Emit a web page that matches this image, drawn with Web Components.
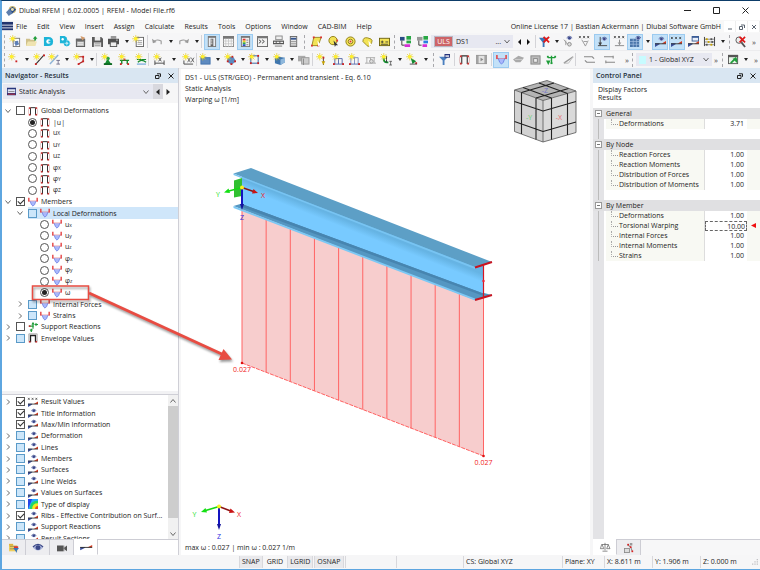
<!DOCTYPE html>
<html lang="en">
<head>
<meta charset="utf-8">
<title>Dlubal RFEM</title>
<style>
html,body{margin:0;height:100%}
body{font:7px/10px "Open Sans","Noto Sans",sans-serif;color:#1c1c1c;background:#f7f7f8;overflow:hidden}
rfem-app{box-sizing:border-box}
</style>
</head>
<body>
<rfem-app></rfem-app>
<script>
/* ---------- helpers ---------- */
const RESET = `*{box-sizing:border-box}button,input,select{font:inherit;color:inherit;margin:0;padding:0;border:0;background:none;border-radius:0}
button{display:flex;align-items:center;justify-content:center}`;
function define(name, css, html){
  customElements.define(name, class extends HTMLElement{
    connectedCallback(){
      if(this.shadowRoot) return;
      this.attachShadow({mode:'open'}).innerHTML = `<style>${RESET}${css}</style>` + (typeof html === 'function' ? html(this) : html);
    }
  });
}
const P = (d,s,w=1,f='none') => `<path d="${d}" stroke="${s}" stroke-width="${w}" fill="${f}"/>`;
const F = (d,f) => `<path d="${d}" fill="${f}"/>`;
const R = (x,y,w,h,f,s) => `<rect x="${x}" y="${y}" width="${w}" height="${h}" fill="${f}"${s?` stroke="${s}"`:''}/>`;
const C = (x,y,r,f,s) => `<circle cx="${x}" cy="${y}" r="${r}" fill="${f}"${s?` stroke="${s}"`:''}/>`;
const dots = (c,...p) => p.map(([x,y])=>R(x-1,y-1,2,2,c)).join('');
const sun = P('M3 -1v8M-1 3h8M0 0l6 6M6 0L0 6','#e3c61a',.7)+C(3,3,2,'#fff02a');
const eye = (x,y) => `<g transform="translate(${x} ${y})">`+F('M0 2.5Q3 -1 6 2.5Q3 6 0 2.5z','#aab4dc')+C(3,2.4,1.5,'#3a4788')+P('M0 2Q3 -1.4 6 2','#3a4788',.8)+'</g>';
const wedge = F('M0 8v4L5 9V8z','#3a4f9c')+F('M7 8.500L12 5.500V8.500z','#d33a1f')+P('M0 8.500h12','#333',1);
const xxx = P('M0 0l2 2.4M2 0L0 2.4M4.5 0l2 2.4M6.500 0l-2 2.4M9 0l2 2.4M11 0L9 2.4','#333',.8);
const W = P('M1 1v4M11 1v4','#e33a3a',1.6)+P('M0 5h12','#e33a3a',.8)+F('M2.500 5h7L8 9 6 11 4 9z','#a9b8fb')+P('M2.500 5L4 9l2 2 2-2 1.500-4','#5a70e0',.8);
const frame = P('M3 11V2h6v9','#333',1.2)+dots('#c33',[2,10.500],[10,10.500],[2,2.500],[10,2.500])+P('M1 3Q0 6 1 10M11 3Q12 6 11 10','#c88',.6);
const ICONS = {
 app:C(7,5,4,'#c9b877')+F('M2 6l5-4 4 3-5 5z','#2a4c86')+F('M0 8l4-4 3 5-4 3z','#5f7fae')+C(7,5,1.6,'#e8e0b0'),
 logo:R(0,1,12,9,'#22346e')+P('M0 4.500h12M0 7.500h12','#fff',.9),
 new:R(3.500,2.500,7,9,'#fff','#777')+P('M5 6h4M5 8h4','#4a6fb5')+F('M5 7l3-2 2 4-4 2z','#5d7fb8')+sun,
 open:F('M0 3h4l1 1h5v7H0z','#cfc08a')+F('M2 6h10l-2 5H0z','#efe3b0')+F('M9 5V3H7.500L10 0l2.500 3H11v2z','#1f9d3a'),
 cloud:F('M1 1h5q5 0 5 5t-5 5H1z','#1cb4d8')+C(6,6,2.400,'#fff')+R(6,5,3,2,'#1cb4d8'),
 gear:F('M1 0h5q3 1 3 4L7 8H1z','#1cb4d8')+C(8.500,8,3.300,'#1cb4d8')+C(8.500,8,1.300,'#fff')+C(4,3.500,1.300,'#fff')+P('M4 8h9M8.500 4v8','#8fdcee',.6),
 manage:R(1.500,3.500,9,8,'#b8b8b8','#555')+R(1,3,10,3,'#6a6a6a')+F('M6 0l5 2-3 3z','#d39a6a')+R(3,7,6,1,'#fff')+P('M3 9.500h6','#eee'),
 save:F('M0 1h10l2 2v9H0z','#5a5a5a')+R(3,1,6,4,'#eee')+R(2,7,8,5,'#ddd')+P('M3 8.500h6M3 10.500h6','#777',.6),
 print:R(3,0,6,3,'#999')+R(0,3,12,6,'#505050')+R(2.500,6.500,7,5,'#eee','#555')+R(9,4,1.500,1,'#eee'),
 report:R(3.500,1.500,8,10,'#fff','#666')+P('M5 5h5M5 7h5M5 9h5','#888',.8)+sun,
 undo:P('M2 6Q5 3 10 5.500V9','#999',1.2)+F('M0 3l1 5 4-1.500z','#999'),
 redo:P('M10 6Q7 3 2 5.500V9','#999',1.2)+F('M12 3l-1 5-4-1.500z','#999'),
 panel:R(2,0,9,12,'#777')+R(3,2,7,9,'#e9edf3')+R(5,3,3,8,'#666')+P('M5 4.500h2M5 6.500h2M5 8.500h2','#fff',.9),
 table:R(.500,.500,11,11,'#fafafa','#888')+R(0,0,12,3,'#777')+P('M0 5.500h12M0 8.500h12M3 3v9M6 3v9M9 3v9','#bbb',.7),
 panelc:R(1,0,10,12,'#777')+R(2,2,8,9,'#eee')+R(3,3,3,2,'#d33')+R(3,5,3,2,'#e8d020')+R(3,7,3,2,'#2fa84a')+R(3,9,3,2,'#2a52c8')+P('M7 4.500h2M7 7h2M7 9.500h2','#666',.8),
 console:R(.500,.500,11,11,'#f2f2f2','#666')+R(0,0,12,2.500,'#777')+P('M2 4l2.500 2L2 8M5.500 4L8 6 5.500 8','#333',.9),
 mac:R(3,0,7,4,'#eee','#888')+R(0,5,12,4,'#555')+P('M1 7h2M4 7h3M8 7h3','#eee',1.400)+P('M2 11h8','#777'),
 scale:R(2.500,.500,7,11,'#e6e6e6','#666')+R(3,2,6,2,'#36558f')+P('M3 6h6M3 8h6M3 10h6','#888',.8),
 selq:P('M3 1.500h8L8 10.500H1z','#8b7b10',.9,'#f3e356')+dots('#d33',[3,1.500],[11,1.500],[1,10.500],[8,10.500])+F('M7 5l4 5-2 0-1 2z','#fff'),
 selc:C(5.500,5,4.500,'#f3e356','#8b7b10')+F('M6 5l5 5-2.500 0-1 2z','#333')+dots('#d33',[10,5]),
 selr:C(6,6,5,'#f3e356','#8b7b10')+C(6,6,2.500,'#fff6b0','#8b7b10')+dots('#d33',[6,6]),
 sell:P('M1 6Q1 1 6 2t5 3-2 5-5-1z','#8b7b10',.9,'#f3e356')+F('M7 5l4 5-2 0-1 2z','#fff'),
 selb:R(.500,2.500,11,8,'#f3e356','#6b6010')+P('M2 6.500h3M3.500 5v3M7 6.500h3M2 9h8','#333',.9),
 tree1:R(0,1,5,4,'#2a4c86')+R(7,0,5,4,'#29a745')+R(7,5,5,3,'#29a745')+R(5,9,6,3,'#d62fd6')+P('M2 5v5h3','#333'),
 tree2:R(0,1,6,4,'#999')+R(7,0,5,4,'#29a745')+R(7,5,5,3,'#2a7fe0')+R(6,9,5,3,'#d62fd6')+P('M2 5v5h3','#333'),
 filterx:F('M0 2h10L6 7v5H4V7z','#3a76b8')+P('M5 1l6 6M11 1L5 7','#e01818',2),
 eye1:eye(4,0)+P('M1 4l4 5M3 5v5','#999')+C(7,9,2,'#ddd','#888'),
 x1:xxx+P('M3 4l4 7 3-6M5 6h4','#999',1),
 load:P('M3.500 1v8M1 10.500h10','#444')+F('M1.500 7h4l-2 4z','#444')+eye(5,1),
 x2:xxx+P('M6 4v6M1 10.500h10','#888')+F('M4 7h4l-2 3z','#999'),
 grid:R(0,3,10,9,'#4a76aa')+P('M0 6h10M0 9h10M3.500 3v9M7 3v9','#a9c4e4',.7)+eye(6,0),
 res1:wedge+eye(4,1), res2:wedge+`<g transform="translate(0 1)">${xxx}</g>`,
 win:R(4,0,8,6,'#3a5c96')+R(5,2,6,3,'#e8eef8')+wedge,
 abac:P('M.500 1v10M11.500 1v10','#333',1)+P('M0 3.500h12M0 6.500h12M0 9.500h12','#555',.7)+dots('#c9a400',[3,3.500],[5,6.500],[8,9.500])+dots('#555',[8,3.500],[9,6.500],[3,9.500]),
 magx:C(4.500,4.500,3.500,'#eee','#555')+P('M7 7l4 5','#555',2)+P('M5 1l6 6M11 1L5 7','#e01818',1.8),
 node:sun+dots('#c22',[8,8]), line:P('M2 11L11 1','#333',1.2)+dots('#c22',[2,11],[11,1.500])+sun,
 line2:P('M1 11L10 1','#8fb4d8',1.600)+sun+P('M8 7h4M10 7v4M8 11h4','#557',.8),
 poly:P('M2 3h8v5L5 11','#a22',1.2)+sun+dots('#c22',[10,3],[10,8],[5,11]),
 sup1:F('M3 11l3-6 4 6z','#138a2f')+R(2,10,9,2,'#0f6b24')+C(6.500,5,2,'#27a045')+sun,
 sup2:P('M1 7h10M3 7v4M9 7v4','#138a2f',1.500)+dots('#c22',[2,11],[10,11],[6,6])+sun,
 sup3:P('M1 6h10M2 9Q6 5 11 9','#138a2f',1.300)+P('M1 11h10','#4a90d0')+sun,
 dim1:P('M1 7v5M11 7v5M1 10h10','#444')+P('M5 4l3 4M8 4L5 8','#222',.8)+sun,
 dim2:P('M1 7v4h10','#444')+P('M5 4l3 5M8 4L5 9M9 4l3 5M12 4L9 9','#333',.7)+sun,
 surf:R(1,4,10,7,'#5d8ac0','#4272ac')+sun, blob:F('M3 3l6 0 3 5-5 4-5-4z','#5d8ac0')+dots('#c22',[3,8],[11,8],[7,11],[8,3])+sun,
 opening:R(2,2,8,8,'none','#2d5f9c')+dots('#c22',[2,2],[10,2],[2,10],[10,10])+sun,
 solid:F('M1 5l4-2 7 1v5l-5 3-6-2z','#3f76ae')+F('M7 6l5-2v5l-5 3z','#8fb8dc')+sun,
 solidg:R(0,2,8,6,'#aaa')+R(4,4,8,7,'#ccc','#999')+P('M6 5v7','#888'),
 l1:P('M7 3v9','#444')+dots('#c22',[7,4])+F('M5 8h4l-2 4z','#c9a400')+sun,
 l2:P('M1 11h10M2 5v6M6 5v6M10 5v6M2 5h8','#5468a8')+dots('#c22',[1,11],[11,11])+sun,
 l3:P('M2 4h8v7M2 4v7M6 4v7','#7c8cc0')+P('M1 11h10','#5468a8')+dots('#c22',[1,11],[11,11])+sun,
 l4:P('M1 4h10M2 4v6M6 4v6M10 4v6M0 10h12','#aaa')+C(7,8,2,'#ddd','#999'),
 l5:P('M3 3Q2 10 8 9','#138a2f',2)+P('M9 8h3M10.500 8v4M9 12h3','#444',.8)+P('M6 2v7','#333')+sun,
 l6:F('M4 4l6 4-4 3z','#138a2f')+dots('#c22',[10,10])+P('M3 11h8','#444')+sun,
 filter:F('M0 3h10L6 7v5H4V7z','#4a7fbf')+R(6,0,6,4,'#27357c')+R(7,1.500,4,1.500,'#fff'),
 frame, film:R(.500,1.500,11,9,'#e2e2e2','#999')+P('M2 1v10M10 1v10','#999',1.5)+F('M5 4l3 2-3 2z','#888'),
 warp:W, s1:F('M0 6l6-4 6 2-4 5-5 0z','#aaa')+P('M2 6h8','#ccc'), s2:R(1,2,10,9,'#bbb','#888')+R(4,5,4,4,'#eee','#888'),
 s3:P('M6 2v9M2 4h8','#1f9d3a',1.500)+dots('#1f9d3a',[2,3],[10,3],[6,10])+F('M0 7h5l-2.500 5z','#1f9d3a'),
 s4:P('M1 10L11 3','#999',1.500)+P('M1 10h5L11 3','#bbb'), s5:P('M0 3h9l2 2M12 9H3L1 7','#888',1.200),
 s6:P('M0 3h10M10 2v3M2 9h10M2 7v3','#888',1.200), cs:R(.500,1.500,10,9,'#e8f4e8','#555')+R(0,1,11,2.500,'#555')+P('M3 10L9 4','#1f9d3a',2)+F('M5 5h5v5z','#1f9d3a'),
 type:R(0,0,12,12,'#27a7ff')+F('M0 0h5L0 12z','#2746e8')+F('M12 12V2Q2 2 2 12z','#20d868')+F('M12 12V5Q5 5 5 12z','#f4e920')+F('M12 12V8.500Q8.500 8.500 8.500 12z','#f04a20'),
 react:P('M6 1v7M1 5h6M8 3h4M4 8v4','#1f9d3a',1.4)+F('M4 3l2-3 2 3zM9 1l3 2-3 2zM2 9h4l-2 3z','#1f9d3a')+dots('#c33',[2,5]),
 envelope:P('M3 11V3h6v8','#222',1.6)+dots('#c33',[2,10.500],[10,10.500])+P('M1 1h10M1 1v9M11 1v9','#777',.7),
 tabdata:R(0,1,5,3,'#e0b23a')+F('M0 3h10v7H0z','#f0cf5a')+P('M1 4h9M1 7h7','#555',.6)+F('M5 6h7L9.500 9v3z','#3a76b8')+R(6,4,5,2,'#d33'),
 tabeye:`<g transform="translate(0 1) scale(2 1.900)">${eye(0,0)}</g>`, camera:R(0,3,8,7,'#555')+F('M8 6l4-3v7L8 7z','#555')+P('M9 3v7','#999',.5),
 wedge:`<g transform="translate(-1 -2) scale(1.200 1)">${wedge}</g>`,
 balance:P('M6 1v9M2 3h8M2 3L.500 8h4L2.500 3M10 3L8 8h4L9.800 3M3 11h6','#555',.8), panel2:R(.500,6.500,6,5,'#ddd','#888')+P('M4 2l4 3 2 5','#888',1.3)+dots('#d22',[5,2],[8,5],[10,10])+R(7,0,3,3,'#999'),
 combo:R(0,1,12,10,'#27357c')+R(1,3,10,5,'#dfe6f5')+P('M1 9.500h10','#d33',1.200)+P('M2 6h8','#777')
};
ICONS.val = ICONS.res2;
define('ui-icon', `:host{display:block;width:11px;height:11px;flex:none}svg{display:block;width:100%;height:100%;overflow:visible}`,
 el => `<svg viewBox="0 0 12 12" aria-hidden="true">${ICONS[el.getAttribute('name')]||''}</svg>`);

/* ---------- window chrome ---------- */
define('title-bar', `:host{display:flex;align-items:center;height:19px;flex:none;background:#fff;padding-left:4px}
 h1{font:inherit;margin:0 0 0 2px;flex:1}button{width:29px;height:19px}svg{width:7px;height:7px;fill:none;stroke:#222;stroke-width:1}`,
 `<ui-icon name="app"></ui-icon><h1>Dlubal RFEM | 6.02.0005 | RFEM - Model File.rf6</h1>
 <button aria-label="Minimize"><svg viewBox="0 0 7 7"><path d="M0 3.500h7"/></svg></button>
 <button aria-label="Maximize"><svg viewBox="0 0 7 7"><path d="M.500.500h6v6h-6z"/></svg></button>
 <button aria-label="Close"><svg viewBox="0 0 7 7"><path d="M.500.500l6 6M6.500.500l-6 6"/></svg></button>`);
define('menu-bar', `:host{display:flex;align-items:center;height:13px;flex:none;background:#f8f8f8}
 nav{display:flex;flex:1;gap:10px;margin-left:3px}.b{width:12px;height:11px;background:#fff;border-right:1px solid #eee}svg{width:6px;height:6px;fill:none;stroke:#5a6470}
 span{margin-right:3px}`,
 () => `<ui-icon name="logo"></ui-icon><nav>${'File Edit View Insert Assign Calculate Results Tools Options Window CAD-BIM Help'.split(' ').map(t=>`<button>${t}</button>`).join('')}</nav>
 <span>Online License 17 | Bastian Ackermann | Dlubal Software GmbH</span>
 <button class="b" aria-label="Minimize document"><svg viewBox="0 0 6 6"><path d="M1 5h4"/></svg></button>
 <button class="b" aria-label="Restore document"><svg viewBox="0 0 6 6"><path d="M.500 2.500h3v3h-3zM2 1h3.500v3"/></svg></button>
 <button class="b" aria-label="Close document"><svg viewBox="0 0 6 6"><path d="M1 1l4 4M5 1L1 5"/></svg></button>`);

/* ---------- toolbars ---------- */
/* tokens: name = button, name* = active button, v = drop-down arrow, | = separator, : = grip, l r = step arrows, > = overflow */
define('tool-group', `:host{display:flex;align-items:center;justify-content:space-between;flex:none;height:18px}
 button{height:16px;width:14px;flex:none}.v,.s{width:8px}.on{background:#c3e1f8;border:1px solid #9ccbf0;width:16px}
 .v::before{content:"";border:2px solid transparent;border-top:3px solid #222;border-bottom:0}
 .l::before,.r::before{content:"";border:3px solid transparent}.l::before{border-right:3px solid #111;border-left:0}.r::before{border-left:3px solid #111;border-right:0}
 i{width:1px;height:13px;background:#d4d4d8}.g{width:2px;height:14px;background:none;border-left:1px dashed #a8a8ac}
 .m{width:8px;font-size:8px;color:#444}`,
 el => el.getAttribute('items').split(' ').map(t=>{
  if(t==='|') return '<i></i>'; if(t===':') return '<i class="g"></i>';
  if(t==='v') return '<button class="v" aria-label="More options"></button>';
  if(t==='l') return '<button class="s l" aria-label="Previous"></button>';
  if(t==='r') return '<button class="s r" aria-label="Next"></button>';
  if(t==='>') return '<button class="m" aria-label="Show more">»</button>';
  const on=t.endsWith('*'), n=t.replace('*','');
  return `<button${on?' class="on" aria-pressed="true"':''} aria-label="${n}"><ui-icon name="${n}"></ui-icon></button>`;
 }).join(''));
define('tool-combo', `:host{display:flex;align-items:center;height:13px;flex:none;background:#e7e8f1;padding:0 3px;gap:3px}
 select{appearance:none;flex:1;min-width:0;height:12px}svg{width:6px;height:5px;fill:none;stroke:#666;flex:none}`,
 el => `<slot name="lead"></slot><select aria-label="${el.getAttribute('label')}"><option>${el.getAttribute('value')}</option></select><slot name="tail"></slot><svg viewBox="0 0 6 5"><path d="M.500 1L3 4l2.500-3"/></svg>`);
define('tool-strip', `:host{display:flex;align-items:center;height:18px;flex:none;background:#f6f6f7;border-bottom:1px solid #ececee;padding-left:2px}
 .badge{background:#cd6468;color:#fff;width:19px;line-height:9px;text-align:center;border:1px solid #b9b9c4}.sw{width:7px;height:8px;background:#c8fbff}`,
 el => el.getAttribute('row')==='1' ? `
 <tool-group style="width:127px" items=": new open cloud gear manage save print v"></tool-group>
 <tool-group style="width:70px" items="report | undo v redo v"></tool-group>
 <tool-group style="width:100px" items="| panel* table panelc* console mac scale"></tool-group>
 <tool-group style="width:87px;margin-left:3px" items=": selq selc selr sell selb"></tool-group>
 <tool-group style="width:35px;margin:0 2px 0 3px" items=": tree1 tree2"></tool-group>
 <tool-combo style="width:82px" label="Load case" value="DS1"><span slot="lead" class="badge">ULS</span><span slot="tail">...</span></tool-combo>
 <tool-group style="width:46px;margin-left:2px" items="l r | filterx v"></tool-group>
 <tool-group style="width:66px" items="eye1 x1 load* x2"></tool-group>
 <tool-group style="width:58px" items="grid* v res1* res2*"></tool-group>
 <tool-group style="width:72px;margin-left:1px" items="win abac v : magx >"></tool-group>` : `
 <tool-group style="width:92px" items=": node v line line2 v poly v"></tool-group>
 <tool-group style="width:52px" items="| sup1 sup2 sup3"></tool-group>
 <tool-group style="width:48px" items="| dim1 v dim2"></tool-group>
 <tool-group style="width:100px" items="| surf v blob v opening v solid v"></tool-group>
 <tool-group style="width:134px" items="solidg | l1 l2 l3 l4 l5 v l6 v"></tool-group>
 <tool-group style="width:59px;margin-left:3px" items=": filter | frame film |"></tool-group>
 <tool-group style="width:82px;margin-left:1px" items="warp* s1 s2 s3 s4"></tool-group>
 <tool-group style="width:56px" items="| s5 s6 >"></tool-group>
 <tool-group style="width:4px;margin-left:1px" items=":"></tool-group>
 <tool-combo style="width:76px" label="Coordinate system" value="1 - Global XYZ"><span slot="lead" class="sw"></span></tool-combo>
 <tool-group style="width:48px" items="> : cs v >"></tool-group>`);

/* ---------- docked panels ---------- */
define('panel-head', `:host{display:flex;align-items:center;height:15px;flex:none;background:#d9e6f2;padding:0 1px 0 3px}
 h2{font:600 7px/10px "Open Sans",sans-serif;margin:0;flex:1;color:#25303c}button{width:13px;height:13px}svg{width:6px;height:6px;fill:none;stroke:#222}`,
 `<h2><slot></slot></h2><button aria-label="Float panel"><svg viewBox="0 0 6 6"><path d="M.500 2.500h3.500v3H.500zM2 .800h3.500v3"/></svg></button>
 <button aria-label="Close panel"><svg viewBox="0 0 6 6"><path d="M.500.500l5 5M5.500.500l-5 5"/></svg></button>`);
define('tree-row', `:host{display:flex;align-items:center;min-height:0}
 :host([selected]) .pick{background:#cfe6fa}
 .pick{display:flex;align-items:center;gap:3px;flex:1;height:100%;min-width:0}
 .tg{width:10px;height:10px;margin-right:3px;flex:none}.tg svg{width:6px;height:6px;fill:none;stroke:#666}
 .no{visibility:hidden}
 input{appearance:none;width:9px;height:9px;border:1px solid #555;background:#fff;display:grid;place-items:center;flex:none}
 input.mixed{background:#cce6fa;border-color:#5a9ac8}
 input[type=checkbox]:checked::before{content:"";width:5px;height:3px;border:solid #333;border-width:0 0 1px 1px;transform:translateY(-1px) rotate(-45deg)}
 input[type=radio]{border-radius:50%}input[type=radio]:checked::before{content:"";width:5px;height:5px;border-radius:50%;background:#222}
 label{white-space:nowrap;display:flex;line-height:11px}::slotted(sub){font-size:5px;line-height:11px;padding-top:1px}
 ui-icon{width:10px;height:10px}`,
 el => {
  const lv=+el.getAttribute('level')||0, k=el.getAttribute('kind'), tg=el.getAttribute('toggle');
  const radio=k.startsWith('radio');
  return `<span style="width:${1+lv*12}px;flex:none"></span>
  <button class="tg${tg?'':' no'}" aria-label="Toggle branch"><svg viewBox="0 0 6 6"><path d="${tg==='open'?'M.500 1.500L3 4.500l2.500-3':'M2 .500l2.500 2.500L2 5.500'}"/></svg></button>
  <div class="pick"><input id="i" type="${radio?'radio':'checkbox'}" class="${k}"${k==='checked'||k==='radio-on'?' checked':''}>
  <ui-icon name="${el.getAttribute('icon')}"></ui-icon><label for="i"><slot></slot></label></div>`;
 });
const row=(level,toggle,kind,icon,text,extra='')=>`<tree-row level="${level}" ${toggle?`toggle="${toggle}"`:''} kind="${kind}" icon="${icon}" ${extra}>${text}</tree-row>`;
define('tab-strip', `:host{display:flex;height:16px;flex:none;border-top:1px solid #cdcdd4}
 button{width:24px;height:16px;background:#ededf0;border:solid #cdcdd4;border-width:0 1px 1px 0}
 .a{background:#fff;margin-top:-1px;border-bottom-color:#fff}ui-icon{width:10px;height:10px}`,
 el => el.getAttribute('items').split(' ').map(t=>`<button class="${t.endsWith('*')?'a':''}" aria-label="${t.replace('*','')}"><ui-icon name="${t.replace('*','')}"></ui-icon></button>`).join(''));
define('results-navigator', `:host{display:flex;flex-direction:column;width:177px;flex:none;background:#fff;border-right:1px solid #cfcfd6;min-height:0;margin:-1px 0 0}
 .bar{display:flex;align-items:center;background:#f6f6f7;height:20px;flex:none;padding:0 5px 3px 1px}
 .combo{display:flex;flex:1;align-items:center;background:#e7e8f1;height:15px;padding:0 4px;gap:3px}
 .combo ui-icon{width:9px;height:9px}select{appearance:none;flex:1}
 svg{width:6px;height:6px;fill:none;stroke:#666}.st{width:10px;height:15px}.st svg{fill:#222;stroke:none}.p{background:#d8d8de}
 .tree{display:grid;grid-auto-rows:1fr;height:239px;flex:none;margin-top:2px}
 .split{flex:1;border-bottom:1px solid #cfcfd6;background:#fff;display:flex;align-items:end}.split::after{content:"";height:3px;flex:1;background:#f2f2f4}
 .low{display:grid;grid-template-columns:1fr 10px;height:144px;flex:none;overflow:hidden}
 .list{display:grid;grid-auto-rows:1fr;height:149px;padding-top:1px;min-width:0;overflow:hidden}
 .sb{display:flex;flex-direction:column;background:#f1f1f1;height:144px}.sb button{height:11px}.sb div{height:112px;background:#cdcdcd}.sb span{flex:1}`,
 () => `<panel-head>Navigator - Results</panel-head>
 <div class="bar"><div class="combo"><ui-icon name="combo"></ui-icon><select aria-label="Analysis type"><option>Static Analysis</option></select><svg viewBox="0 0 6 6"><path d="M.500 1.500L3 4.500l2.500-3"/></svg></div>
 <button class="st p" aria-label="Previous"><svg viewBox="0 0 6 6"><path d="M4.500 0v6L1 3z"/></svg></button><button class="st" aria-label="Next"><svg viewBox="0 0 6 6"><path d="M1.500 0v6L5 3z"/></svg></button></div>
 <div class="tree">${row(0,'open','box','frame','Global Deformations')}${row(1,'','radio-on','frame','|u|')}
 ${['u<sub>X</sub>','u<sub>Y</sub>','u<sub>Z</sub>','φ<sub>X</sub>','φ<sub>Y</sub>','φ<sub>Z</sub>'].map(t=>row(1,'','radio','frame',t)).join('')}
 ${row(0,'open','checked','warp','Members')}${row(1,'open','mixed','warp','Local Deformations','selected')}
 ${['u<sub>x</sub>','u<sub>y</sub>','u<sub>z</sub>','φ<sub>x</sub>','φ<sub>y</sub>','φ<sub>z</sub>'].map(t=>row(2,'','radio','warp',t)).join('')}
 ${row(2,'','radio-on','warp','ω')}${row(1,'shut','mixed','warp','Internal Forces')}${row(1,'shut','mixed','warp','Strains')}
 ${row(0,'shut','box','react','Support Reactions')}${row(0,'shut','mixed','envelope','Envelope Values')}</div>
 <div class="split"></div>
 <div class="low"><div class="list">${row(0,'shut','checked','val','Result Values')}${row(0,'','checked','res1','Title Information')}${row(0,'','checked','res1','Max/Min Information')}
 ${['Deformation','Lines','Members','Surfaces','Line Welds','Values on Surfaces'].map(t=>row(0,'shut','mixed','res1',t)).join('')}
 ${row(0,'shut','mixed','type','Type of display')}${row(0,'shut','checked','res1','Ribs - Effective Contribution on Surf...')}
 ${row(0,'shut','mixed','res1','Support Reactions')}${row(0,'shut','mixed','res1','Result Sections')}</div>
 <div class="sb"><button aria-label="Scroll up"><svg viewBox="0 0 6 6"><path d="M.500 4.500L3 1.500l2.500 3"/></svg></button><div></div><span></span><button aria-label="Scroll down"><svg viewBox="0 0 6 6"><path d="M.500 1.500L3 4.500l2.500-3"/></svg></button></div></div>
 <tab-strip items="tabdata tabeye camera wedge*"></tab-strip>`);

define('factor-table', `:host{display:block;flex:1;background:linear-gradient(90deg,#e3e3e6 11px,#fff 11px)}
 table{width:100%;border-spacing:0;table-layout:fixed}td,th{padding:0;height:10px;line-height:10px;font-weight:400;text-align:left;white-space:nowrap;vertical-align:top}
 .g th{height:11px;line-height:11px;background:#e0e0e2}.g span{margin-left:2px}
 .x b{display:block;width:7px;height:7px;margin:2px auto;border:1px solid #999;background:linear-gradient(#777,#777) center/3px 1px no-repeat #fff}
 td.x{background:linear-gradient(#bbb,#bbb) center/1px 100% no-repeat}
 .n{background:#f8f9f3;display:flex;align-items:center;height:10px;margin-left:2px}.n::before{content:"";width:6px;border-bottom:1px dotted #999;border-left:1px dotted #aaa;height:5px;margin:0 1px 5px 5px}
 td.v{text-align:right;padding-right:3px;background:#fff;border-left:1px solid #ddd}td.ed{padding:0}.e{background:#f8f9f3}
 input{width:100%;height:10px;line-height:8px;text-align:right;border:1px dashed #666;display:block;padding-right:1px}
 .e svg{display:block;width:5px;height:5px;margin:2px 0 0 4px}`,
 () => {
  const g=(t,rows,last)=>`<tr class="g"><th class="x"><b></b></th><th colspan="3"><span>${t}</span></th></tr>`+rows.map(([n,v])=>`<tr><td class="x"></td><td><div class="n">${n}</div></td>${
   n==='Torsional Warping'?`<td class="v ed"><input aria-label="${n}" value="${v}"></td><td class="e"><svg viewBox="0 0 5 5"><path d="M0 2.500L5 0v5z" fill="#f01010"/></svg></td>`:`<td class="v">${v}</td><td class="e"></td>`}</tr>`).join('')+(last?'':'<tr><td class="x"></td><td></td><td></td><td></td></tr>');
  return `<table><colgroup><col style="width:11px"><col><col style="width:43px"><col style="width:13px"></colgroup><tbody>${g('General',[['Deformations','3.71']])}${g('By Node',[['Reaction Forces','1.00'],['Reaction Moments','1.00'],['Distribution of Forces','1.00'],['Distribution of Moments','1.00']])}${g('By Member',[['Deformations','1.00'],['Torsional Warping','10.00'],['Internal Forces','1.00'],['Internal Moments','1.00'],['Strains','1.00']],1)}</tbody></table>`;
 });
define('control-panel', `:host{display:flex;flex-direction:column;width:167px;flex:none;background:#fff;margin:-1px 0 0}
 p{margin:0;padding:3px 5px 0;line-height:8px;height:25px;flex:none}tab-strip{background:#f7f7f8}`,
 `<panel-head>Control Panel</panel-head><p>Display Factors<br>Results</p><factor-table></factor-table><tab-strip items="balance* panel2"></tab-strip>`);

/* ---------- model view ---------- */
const axes = (x,y,X,Y,Z,lab) => `<g stroke-width="1.600">
 <path d="M${x} ${y}L${X[0]} ${X[1]}" stroke="#8c1414"/><path d="M${x} ${y}L${Y[0]} ${Y[1]}" stroke="#14d814"/><path d="M${x} ${y}V${Z}" stroke="#1414c0" stroke-width="2"/></g>
 <path d="M${X[0]+3} ${X[1]+1}l-6 .500 1.500-4.500z" fill="#c81414"/><path d="M${Y[0]-3} ${Y[1]+1}l4.500-4 1.500 4.500z" fill="#14e014"/><path d="M${x-2} ${Z-2}h4l-2 6z" fill="#14149c"/>
 <circle cx="${x}" cy="${y}" r="2" fill="#f8f020"/>
 <g text-anchor="middle"><text x="${lab[0]}" y="${lab[1]}" fill="#f02020">X</text><text x="${lab[2]}" y="${lab[3]}" fill="#20e020">Y</text><text x="${lab[4]}" y="${lab[5]}" fill="#3030e0">Z</text></g>`;
define('model-view', `:host{display:flex;flex-direction:column;justify-content:space-between;flex:1;min-width:0;background:#fff;position:relative;margin:0 3px 0 2px;padding:3px 4px 2px}
 svg{position:absolute;inset:0;width:100%;height:100%}text{font:7px "Open Sans",sans-serif}.face{font-size:9px}
 p{margin:0;line-height:11px;position:relative}`,
 () => { let v=''; for(let i=0;i<=10;i++){const x=242+i*24.15; v+=`M${x} ${200+i*9.3}V${363+i*9.3}`;}
 return `<svg viewBox="181 69 409 486" preserveAspectRatio="xMinYMin meet" role="img" aria-label="Beam with warping diagram">
 <defs><linearGradient id="w" gradientUnits="userSpaceOnUse" x1="350" y1="222" x2="339" y2="250"><stop offset="0" stop-color="#66b4e4"/><stop offset=".250" stop-color="#78caff"/><stop offset=".800" stop-color="#78caff"/><stop offset="1" stop-color="#5fa9d8"/></linearGradient></defs>
 <path d="M242 205V363L483.500 456V297z" fill="#f7cdcd"/><path d="${v}" stroke="#ff6464" fill="none"/><path d="M242 363L483.500 456" stroke="#ff6060" stroke-dasharray="4 1"/>
 <circle cx="242" cy="363" r="1.300" fill="#e01010"/><circle cx="483.500" cy="456" r="1.300" fill="#e01010"/>
 <path d="M233.500 206L242 203.500 484 293l8 2-17 5z" fill="#5597c2"/><path d="M233.500 206L475 298.500v2L233.500 208z" fill="#7cc8f4"/>
 <path d="M242 176L483.500 265V293.500L242 204z" fill="url(#w)"/><path d="M242 204L483.500 293.500V296L242 207z" fill="#4785b0"/>
 <path d="M233.500 173.500L251 168 492 262l-17 5z" fill="#5d9fc6"/><path d="M233.500 173.500L475 267v2L233.500 175z" fill="#78c4f2"/>
 <path d="M475 267.500l17-5.500M475 300l17-5" stroke="#c81420" stroke-width="2"/><path d="M483.500 265v33" stroke="#d81420" stroke-width="1.200"/><circle cx="483.500" cy="281" r="1.200" fill="#f02030"/>
 <path d="M234 180.500l8-2.500v18l-8 1.500z" fill="#30c030"/>
 ${axes(242,187.500,[255,192],[227,191.500],206,[263,198,218,197,242,220])}${axes(219,506.500,[232,511.500],[204,511],526,[239,517,194.500,516.500,219,539])}
 <g fill="#f02020" text-anchor="middle"><text x="242" y="372">0.027</text><text x="483.500" y="465">0.027</text></g>
 <g stroke-linejoin="round"><path d="M514.500 90L547 80.500 576 91l-33 9.500z" fill="#b4b4b4"/><path d="M514.500 90L543 100.500V142L514.500 131.500z" fill="#d2d2d2"/><path d="M576 91L543 100.500V142l33-9.500z" fill="#dadada"/>
 <path d="M514.500 90L547 80.500 576 91l-33 9.500zM514.500 90v41.500L543 142l33-9.500V91M543 100.500V142" fill="none" stroke="#555" stroke-width=".800"/>
 <path d="M521.500 92.500v41.500M536 98v41.500M551.500 98v41.500M567.500 93.500V135M514.500 101.500L543 111l33-9.500M514.500 121.500L543 131.500l33-9.500M521.500 92.500L554 83M536 98l32.500-9.500M551.500 98L523 87.500M567.500 93.500L539 83" fill="none" stroke="#222" stroke-width="1.100"/></g>
 <g class="face" text-anchor="middle"><text x="529" y="120" fill="#6cd06c">-Y</text><text x="559" y="120" fill="#e87070">-X</text></g><text x="545" y="93" text-anchor="middle" fill="#7474c8">-Z</text>
 </svg><p>DS1 - ULS (STR/GEO) - Permanent and transient - Eq. 6.10<br>Static Analysis<br>Warping ω [1/m]</p><p>max ω : 0.027 | min ω : 0.027 1/m</p>`;});

define('status-bar', `:host{display:flex;align-items:center;height:14px;flex:none;background:#f6f6f7;padding-left:237px}
 button{height:12px;padding:0 2px;background:#e9e9ec;border-left:1px solid #d8d8dc;border-right:1px solid #d8d8dc;margin-right:1px}.off{background:none;border-color:transparent}
 span{height:12px;line-height:12px;border-left:1px solid #d8d8dc;padding-left:2px;white-space:nowrap}.f{flex:1}
 svg{width:8px;height:8px;fill:#b8b8bc;margin:2px 1px 0 3px}`,
 `<button aria-pressed="true">SNAP</button><button class="off">GRID</button><button aria-pressed="true">LGRID</button><button aria-pressed="true">OSNAP</button>
 <span class="f"></span><span style="width:67px"></span><span style="width:99px">CS: Global XYZ</span><span style="width:42px">Plane: XY</span><span style="width:48px">X: 8.611 m</span><span style="width:48px">Y: 1.906 m</span><span style="width:48px">Z: 0.000 m</span>
 <svg viewBox="0 0 7 7"><path d="M5 0h1v1H5zM3 2h1v1H3zM5 2h1v1H5zM1 4h1v1H1zM3 4h1v1H3zM5 4h1v1H5z"/></svg>`);

define('callout-arrow', `:host{position:absolute;inset:0;pointer-events:none}svg{width:100%;height:100%;display:block;filter:drop-shadow(1px 2px 1px #0006)}`,
 `<svg viewBox="2 1 758 568" preserveAspectRatio="xMinYMin meet" aria-hidden="true"><path d="M32.500 286h56v13.500h-56z" fill="none" stroke="#e84c42" stroke-width="1.500"/><path d="M89 293L225 355.500" stroke="#e84c42" stroke-width="3"/><path d="M232 359.500l-13.500 .500 5-11z" fill="#e84c42"/></svg>`);
define('rfem-app', `:host{display:flex;flex-direction:column;height:100vh;border-top:1px solid #0d3d69;border-left:2px solid #5ea6e0;border-bottom:1px solid #5ea6e0;position:relative}
 main{display:flex;flex:1;min-height:0;background:#f6f6f7}`,
 `<title-bar></title-bar><menu-bar></menu-bar><tool-strip row="1"></tool-strip><tool-strip row="2"></tool-strip>
 <main><results-navigator></results-navigator><model-view></model-view><control-panel></control-panel></main><status-bar></status-bar><callout-arrow></callout-arrow>`);
</script>
</body>
</html>
